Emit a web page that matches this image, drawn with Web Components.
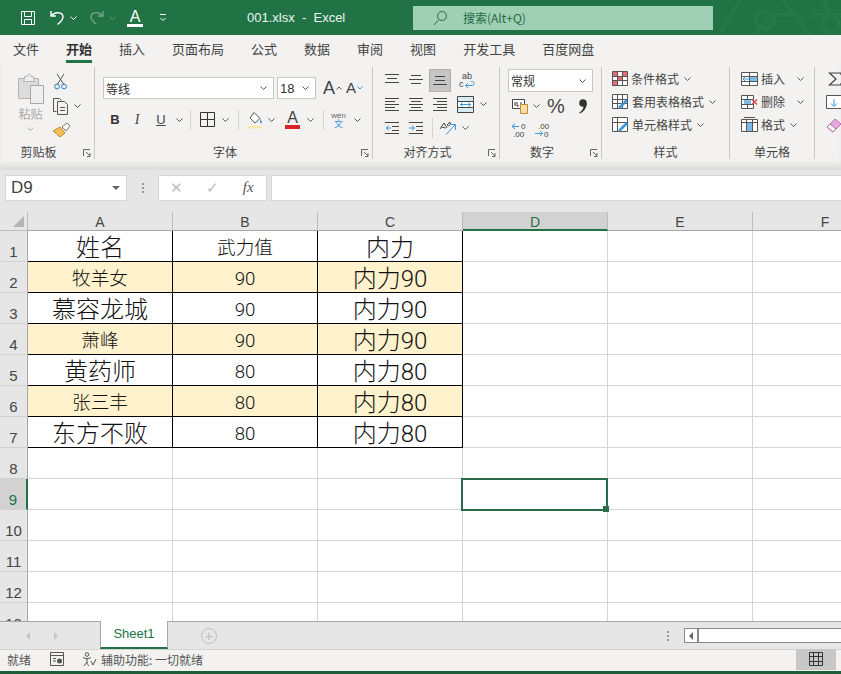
<!doctype html>
<html lang="zh">
<head>
<meta charset="utf-8">
<title>001.xlsx - Excel</title>
<style>
  html, body { margin: 0; height: 100%; overflow: hidden; }
  body {
    font-family: "Noto Sans CJK SC", "Liberation Sans", sans-serif;
    background: #f3f2f1;
  }
  .app { display: flex; flex-direction: column; width: 841px; height: 674px; overflow: hidden; }
</style>
</head>
<body>
<div class="app">
  <xl-titlebar></xl-titlebar>
  <xl-tabs></xl-tabs>
  <xl-ribbon></xl-ribbon>
  <xl-formula-bar></xl-formula-bar>
  <xl-sheet></xl-sheet>
  <xl-sheet-tabs></xl-sheet-tabs>
  <xl-status></xl-status>
</div>
<script>
const BLUE = '#3a96dd'
const DARK = '#444'

const lines = (rows, color = DARK) =>
  `<path stroke="${color}" d="${rows.map(([a, b, y]) => `M${a} ${y + 0.5}H${b}`).join('')}"/>`

// every icon is [width, height, svg body]
const ICONS = {
  save: [16, 16, `<path stroke="#fff" d="M1.5 1.500h13v13h-13zM4.500 1.500v5h7v-5M4.500 14.500v-5h7v5"/>`],
  undo: [16, 17, `<path stroke="#fff" stroke-width="1.400" d="M2 2v5h5M2.500 7C5 2.500 14 2.500 14 8c0 3-2.500 5-5.500 7.500"/>`],
  redo: [16, 17, `<path stroke="#6fa587" stroke-width="1.400" d="M14 2v5H9M13.500 7C11 2.500 2 2.500 2 8c0 3 2.500 5 5.500 7.500"/>`],
  customize: [8, 9, `<path stroke="#fff" d="M1 1.500h6M1.500 5l2.500 2.500L6.500 5"/>`],
  search: [16, 16, `<circle cx="10" cy="6" r="4.500" stroke="#2a6b47"/><path stroke="#2a6b47" d="M7 9.500L2 15"/>`],
  paste: [28, 31, `<path fill="#dcdcdc" stroke="#b4b4b4" d="M1.500 5.500h20v20h-20z"/><path fill="#eee" stroke="#b4b4b4" d="M7.500 5.500v-2h2.500c0-3 4-3 4 0h2.500v2l1 3h-11z"/><path fill="#efefef" stroke="#a8a8a8" d="M13.500 12.500h13v18h-13z"/>`],
  cut: [13, 17, `<path stroke="#555" d="M3 1l6.500 10M10 1L3.500 11"/><circle cx="3" cy="13.500" r="2.400" stroke="#1f7bc0"/><circle cx="10" cy="13.500" r="2.400" stroke="#1f7bc0"/>`],
  copy: [17, 18, `<path stroke="#555" d="M4.500 14.500h-3v-13h6l2 2"/><path stroke="#555" fill="#f3f2f1" d="M5.500 4.500h7l3 3v10h-10z"/><path stroke="#555" d="M8 10.500h5M8 13.500h5"/>`],
  painter: [19, 16, `<path fill="#f2c057" stroke="#c8862c" d="M1 9l7-4 5 6-5 4c-2-2-5-4-7-6z"/><path fill="#fff" stroke="#777" d="M10 5l5-4 3 3-4 5z"/>`],
  borders: [15, 15, `<path stroke="#333" d="M.5.500h14v14H.500zM7.500.500v14M.500 7.500h14"/>`],
  fill: [16, 18, `<path stroke="#555" fill="#fff" d="M6 1.500l6 6-5 4.500-5-5z"/><path fill="#3a96dd" d="M12 8c1 1.500 2 2.500 2 3.500s-2 1-2 0z"/><rect y="15" width="14" height="2.500" fill="#f7e9a8"/>`],
  up: [6, 4, `<path stroke="#555" d="M.5 3.500L3 1l2.500 2.500"/>`],
  down2: [6, 4, `<path stroke="#3a96dd" d="M.5.500L3 3l2.500-2.500"/>`],
  wrap: [16, 19, `<text x="3" y="8" font-size="9" fill="#444" font-family="Liberation Sans">ab</text><text x="0" y="16" font-size="9" fill="#444" font-family="Liberation Sans">c</text><path stroke="${BLUE}" d="M7 14.500h6.500c2 0 2-4 0-4H12M9 12l-2.500 2.500L9 17"/>`],
  merge: [17, 17, `<path fill="#d7ecf8" stroke="#444" d="M.5.500h16v16H.500z"/><path fill="#fff" stroke="#444" d="M.5 5.500h16v6H.500z"/><path stroke="${BLUE}" d="M3 8.500h11M5.500 6.500l-2 2 2 2M11.500 6.500l2 2-2 2"/>`],
  orient: [18, 16, `<path stroke="#444" d="M1 9l4-6 3 5M2.500 7l4 1M8 5l3-3M8 5c2 2 4 0 3-3"/><path stroke="${BLUE}" d="M7 14.500L16 5M11 4.500h5.500V10"/>`],
  indentL: [14, 12, lines([[0, 14, 0], [7, 14, 4], [7, 14, 8], [0, 14, 11]]) + `<path stroke="${BLUE}" d="M1 6h5M3.500 3.500L1 6l2.500 2.500"/>`],
  indentR: [14, 12, lines([[0, 14, 0], [7, 14, 4], [7, 14, 8], [0, 14, 11]]) + `<path stroke="${BLUE}" d="M0 6h5M3 3.500L5.500 6 3 8.500"/>`],
  alignTop: [14, 12, lines([[0, 14, 0], [2, 12, 4], [0, 14, 8]])],
  alignMid: [14, 12, lines([[2, 12, 1], [0, 14, 5], [2, 12, 9]])],
  alignBot: [14, 12, lines([[2, 12, 2], [2, 12, 6], [0, 14, 10]])],
  alignL: [14, 13, lines([[0, 14, 0], [0, 10, 3], [0, 14, 6], [0, 10, 9], [0, 14, 12]])],
  alignC: [14, 13, lines([[0, 14, 0], [2, 12, 3], [0, 14, 6], [2, 12, 9], [0, 14, 12]])],
  alignR: [14, 13, lines([[0, 14, 0], [4, 14, 3], [0, 14, 6], [4, 14, 9], [0, 14, 12]])],
  currency: [16, 16, `<path stroke="#444" fill="#fff" d="M.5 1.500h12v9H.500z"/><path stroke="#333" d="M3 4v4M5 4v4h2M9 4v3"/><path fill="#f7dfae" stroke="#c98a2b" d="M8.500 6.500h7v9h-7z"/>`],
  comma: [9, 15, `<circle cx="5" cy="4" r="3.800" fill="#333"/><path fill="#333" d="M8.800 4c0 5-3 9-7 10.500l-.5-1C4 12 5.500 10 5.500 7z"/>`],
  decInc: [17, 16, `<path stroke="${BLUE}" d="M1 4.500h7M4 2L1 4.500 4 7"/><text x="10" y="7" font-size="8" fill="#444" font-family="Liberation Sans">0</text><text x="2" y="15" font-size="8" fill="#444" font-family="Liberation Sans">.00</text>`],
  decDec: [16, 16, `<text x="3" y="7" font-size="8" fill="#444" font-family="Liberation Sans">.00</text><path stroke="${BLUE}" d="M0 11.500h7M5 9l2.500 2.500L5 14"/><text x="9" y="15" font-size="8" fill="#444" font-family="Liberation Sans">0</text>`],
  condFormat: [16, 15, `<path stroke="#555" fill="#fff" d="M.5.500h15v14H.500z"/><path fill="#e26b74" d="M1 1h5v4H1zM10 1h5v4h-5zM1 10h5v4H1zM6 5h4v5H6z"/><path stroke="#555" d="M5.500 1v13M10.500 1v13M1 5.500h14M1 9.500h14"/>`],
  tableFormat: [17, 16, `<path stroke="#555" fill="#fff" d="M.5.500h15v14H.500z"/><path stroke="#555" d="M5.500 1v13M10.500 1v13M1 5.500h14M1 9.500h14"/><path stroke="${BLUE}" stroke-width="2.500" d="M7 14l8-8"/>`],
  cellStyle: [17, 16, `<path stroke="#555" fill="#fff" d="M.5.500h15v14H.500zM5.500 1v13M1 5.500h14"/><path stroke="${BLUE}" stroke-width="2.500" d="M7 14l8-8"/>`],
  insert: [17, 14, `<path stroke="#555" fill="#fff" d="M.5.500h16v13H.500zM8.500 1v12M1 4.500h15M1 9.500h15"/><path fill="#7cbde8" d="M9 5h7v4H9z"/><path stroke="${BLUE}" d="M2 7h6M4.500 4.500L2 7l2.500 2.500"/>`],
  remove: [17, 14, `<path stroke="#555" fill="#fff" d="M.5.500h12v13H.500zM1 4.500h11M1 9.500h11M6.500 1v12"/><path fill="#7cbde8" d="M3 5h7v4H3z"/><path stroke="#d9434e" stroke-width="1.300" d="M11 4.500l5 5M16 4.500l-5 5"/>`],
  format: [17, 16, `<path stroke="#555" fill="#fff" d="M.5 2.500h16v12H.500zM1 5.500h15M5.500 3v11M11.500 3v11"/><path fill="#7cbde8" d="M6 6h5v8H6z"/><path stroke="#555" d="M3 .500h11"/>`],
  sigma: [14, 14, `<path stroke="#444" stroke-width="1.200" d="M13 3V1H1.500L8 7l-6.500 6H13v-2"/>`],
  down: [16, 14, `<path stroke="#555" fill="#fff" d="M.5.500h15v13H.500z"/><path stroke="${BLUE}" d="M8 4v7M5 8.500L8 11.500l3-3"/>`],
  eraser: [16, 15, `<path fill="#e8a8e0" stroke="#b56bb0" d="M1 9l8-8 6 5-8 8z"/><path fill="#fff" stroke="#b56bb0" d="M1 9l3-3 6 5-3 3z"/>`],
  launcher: [8, 8, `<path stroke="#666" d="M.5 7V.500H7M3 3l4 4M7 4v3.500H4"/>`],
  caret: [7, 4, `<path stroke="#555" d="M.5.500L3.500 3.500 6.500.500"/>`],
  caretPale: [7, 4, `<path stroke="#aaa" d="M.5.500L3.500 3.500 6.500.500"/>`],
  caretGreen: [7, 4, `<path stroke="#fff" d="M.5.500L3.500 3.500 6.500.500"/>`],
  caretDim: [7, 4, `<path stroke="#5f9b7a" d="M.5.500L3.500 3.500 6.500.500"/>`],
  macro: [14, 14, `<path stroke="#555" fill="none" d="M.5.500h13v13H.500zM.5 3.500h13M3 6.500h3M3 9h3"/><circle cx="9.500" cy="9" r="2.500" fill="#555"/>`],
  access: [15, 15, `<circle cx="5" cy="2.500" r="1.800" stroke="#555"/><path stroke="#555" d="M1 5.500c3 1.500 5 1.500 8 0M5 7v3c0 2 1 3 2 4M5 10c-1 1-2 3-3 4M9 9l2 4 3-6"/>`],
  cellView: [14, 14, `<path stroke="#333" d="M.5.500h13v13H.500zM4.500.500v13M9.500.500v13M.500 4.500h13M.500 9.500h13"/>`],
}

customElements.define(
  'xl-icon',
  class XlIcon extends HTMLElement {
    constructor() {
      super()
      this.attachShadow({ mode: 'open' })
    }

    connectedCallback() {
      const [w, h, body] = ICONS[this.getAttribute('name')]
      this.shadowRoot.innerHTML = `
        <style>
          :host { display: inline-flex; flex: none; }
          svg { display: block; fill: none; }
        </style>
        <svg width="${w}" height="${h}" viewBox="0 0 ${w} ${h}">${body}</svg>
      `
    }
  }
)

customElements.define(
  'xl-titlebar',
  class XlTitlebar extends HTMLElement {
    constructor() {
      super()
      this.attachShadow({ mode: 'open' })
      this.shadowRoot.innerHTML = `
        <style>
          :host {
            display: flex;
            flex: none;
            align-items: center;
            height: 35px;
            background: #217346;
            color: #fff;
            position: relative;
            overflow: hidden;
          }
          .qat { display: flex; align-items: center; padding-left: 20px; width: 247px; box-sizing: border-box; }
          .a {
            width: 16px; margin: 0 0 0 11px; text-align: center;
            font: 16px/15px "Liberation Sans", sans-serif;
            border-bottom: 3px solid #fff;
          }
          .title { width: 166px; font: 13px "Liberation Sans", sans-serif; white-space: pre; color: #eef6f1; }
          .search {
            display: flex; align-items: center;
            width: 300px; height: 24px; box-sizing: border-box;
            padding-left: 19px;
            background: #9fcfb4;
            color: #1f6a41;
            font-size: 12px;
            position: relative;
            z-index: 1;
          }
          .search span { margin-left: 15px; }
          .pattern { position: absolute; right: 0; top: 0; }
        </style>
        <div class="qat">
          <xl-icon name="save"></xl-icon>
          <xl-icon name="undo" style="margin-left:13px"></xl-icon>
          <xl-icon name="caretGreen" style="margin-left:5px"></xl-icon>
          <xl-icon name="redo" style="margin-left:12px"></xl-icon>
          <xl-icon name="caretDim" style="margin-left:4px"></xl-icon>
          <div class="a">A</div>
          <xl-icon name="customize" style="margin-left:16px"></xl-icon>
        </div>
        <div class="title">001.xlsx  -  Excel</div>
        <div class="search"><xl-icon name="search"></xl-icon><span>搜索(Alt+Q)</span></div>
        <svg class="pattern" width="128" height="35" fill="none" stroke="#267749" stroke-width="4">
          <path d="M8 30L28 0M40 35l18-20h24l14 20M70 0l12 15M100 15h28M110 0l8 15"/>
          <circle cx="52" cy="20" r="9"/>
          <circle cx="118" cy="24" r="8"/>
        </svg>
      `
    }
  }
)

customElements.define(
  'xl-tabs',
  class XlTabs extends HTMLElement {
    constructor() {
      super()
      this.attachShadow({ mode: 'open' })
      const names = ['文件', '开始', '插入', '页面布局', '公式', '数据', '审阅', '视图', '开发工具', '百度网盘']
      this.shadowRoot.innerHTML = `
        <style>
          :host {
            display: flex;
            flex: none;
            gap: 27px;
            height: 28px;
            padding-left: 13px;
            background: #f3f2f1;
            color: #444;
            font-size: 13px;
          }
          .tab { line-height: 28px; white-space: nowrap; box-sizing: border-box; height: 28px; }
          .on { font-weight: 700; color: #333; border-bottom: 3px solid #217346; }
        </style>
        ${names.map((n, i) => `<div class="tab ${i === 1 ? 'on' : ''}">${n}</div>`).join('')}
      `
    }
  }
)

customElements.define(
  'xl-ribbon-group',
  class XlRibbonGroup extends HTMLElement {
    constructor() {
      super()
      this.attachShadow({ mode: 'open' })
      const launcher = this.hasAttribute('launcher')
      this.shadowRoot.innerHTML = `
        <style>
          :host {
            display: flex;
            flex: none;
            flex-direction: column;
            box-sizing: border-box;
            height: 92px;
            margin-top: 4px;
            border-right: 1px solid #c8c8c8;
            position: relative;
          }
          .body { flex: 1; min-height: 0; }
          .label {
            flex: none;
            height: 18px;
            line-height: 18px;
            margin-bottom: -2px;
            font-size: 12px;
            color: #444;
            text-align: center;
            white-space: nowrap;
            padding-right: ${launcher ? 17 : 0}px;
          }
          xl-icon { position: absolute; right: 3px; bottom: 2px; }
        </style>
        <div class="body"><slot></slot></div>
        <div class="label">${this.getAttribute('label')}</div>
        ${launcher ? '<xl-icon name="launcher"></xl-icon>' : ''}
      `
    }
  }
)

const tool = (name, ml = 0) => `<xl-icon name="${name}" style="margin-left:${ml}px"></xl-icon>`
const styleRow = (icon, text, caretGap = 5) =>
  `<div class="row text">${tool(icon)}<span>${text}</span>${tool('caret', caretGap)}</div>`

customElements.define(
  'xl-ribbon',
  class XlRibbon extends HTMLElement {
    constructor() {
      super()
      this.attachShadow({ mode: 'open' })
      this.shadowRoot.innerHTML = `
        <style>
          :host {
            display: flex;
            flex: none;
            height: 107px;
            box-sizing: border-box;
            padding-bottom: 9px;
            background: #f3f2f1;
            box-shadow: inset 0 -8px 6px -3px #dcdcdc;
            color: #444;
            font-size: 12px;
            overflow: hidden;
          }
          .row { display: flex; align-items: center; }
          .sep { width: 1px; height: 20px; background: #d2d2d2; flex: none; }
          .box {
            display: flex; align-items: center; box-sizing: border-box;
            background: #fff; border: 1px solid #c6c6c6;
            height: 22px; padding: 0 6px 0 2px; justify-content: space-between; color: #333;
          }
          /* clipboard */
          .clip { display: flex; padding: 6px 0 0 17px; }
          .paste { display: flex; flex-direction: column; align-items: center; width: 27px; color: #a8a8a8; }
          .paste span { margin-top: 1px; line-height: 17px; }
          .paste xl-icon:last-child { margin-top: 5px; }
          .clip-tools { display: flex; flex-direction: column; margin-left: 8px; gap: 7px; }
          /* font */
          .font { padding: 10px 0 0 8px; }
          .font .row + .row { margin-top: 11px; height: 19px; }
          .bold { font: 700 13px "Liberation Sans", sans-serif; width: 10px; text-align: center; color: #333; }
          .ital { font: italic 14px "Liberation Serif", serif; width: 10px; text-align: center; }
          .und { font: 13px "Liberation Sans", sans-serif; width: 10px; text-align: center; text-decoration: underline; }
          .grow { font: 18px/18px "Liberation Sans", sans-serif; color: #444; }
          .color { width: 15px; text-align: center; font: 16px/14px "Liberation Sans", sans-serif; border-bottom: 4px solid #d8232a; }
          .wen { width: 15px; text-align: center; font: 8px/9px "Liberation Sans", "Noto Sans CJK SC", sans-serif; color: #666; }
          .wen b { display: block; font-weight: 400; color: #3a96dd; font-size: 9px; }
          /* alignment */
          .align { padding: 1px 0 0 12px; }
          .align .row { height: 24px; }
          .sel { display: flex; align-items: center; justify-content: center; width: 22px; height: 23px; background: #c6c6c6; border: 1px solid #b0b0b0; box-sizing: border-box; flex: none; }
          /* number */
          .num { padding: 2px 0 0 8px; }
          .num .row { height: 24px; }
          .pct { font: 20px "Liberation Sans", sans-serif; color: #444; }
          /* styles and cells */
          .stacked { display: flex; flex-direction: column; gap: 8px; padding: 4px 0 0 10px; }
          .text { height: 15px; line-height: 15px; white-space: nowrap; }
          .text span { margin-left: 3px; }
          .edit { display: flex; flex-direction: column; gap: 9px; padding: 9px 0 0 11px; }
        </style>

        <xl-ribbon-group label="剪贴板" launcher style="width:95px">
          <div class="clip">
            <div class="paste">
              ${tool('paste')}
              <span>粘贴</span>
              ${tool('caretPale')}
            </div>
            <div class="clip-tools">
              ${tool('cut', 2)}
              <div class="row">${tool('copy')}${tool('caret', 5)}</div>
              ${tool('painter')}
            </div>
          </div>
        </xl-ribbon-group>

        <xl-ribbon-group label="字体" launcher style="width:278px">
          <div class="font">
            <div class="row">
              <div class="box" style="width:171px">等线${tool('caret')}</div>
              <div class="box" style="width:39px;margin-left:3px;font:13px 'Liberation Sans',sans-serif">18${tool('caret')}</div>
              <div class="grow" style="margin-left:7px">A</div>
              ${tool('up', 1)}
              <div class="grow" style="margin-left:4px;font-size:15px">A</div>
              ${tool('down2', 1)}
            </div>
            <div class="row">
              <div class="bold" style="margin-left:7px">B</div>
              <div class="ital" style="margin-left:12px">I</div>
              <div class="und" style="margin-left:14px">U</div>
              ${tool('caret', 10)}
              <div class="sep" style="margin-left:7px"></div>
              ${tool('borders', 9)}
              ${tool('caret', 7)}
              <div class="sep" style="margin-left:9px"></div>
              ${tool('fill', 9)}
              ${tool('caret', 4)}
              <div class="color" style="margin-left:10px">A</div>
              ${tool('caret', 7)}
              <div class="sep" style="margin-left:9px"></div>
              <div class="wen" style="margin-left:7px">wén<b>文</b></div>
              ${tool('caret', 8)}
            </div>
          </div>
        </xl-ribbon-group>

        <xl-ribbon-group label="对齐方式" launcher style="width:127px">
          <div class="align">
            <div class="row">
              ${tool('alignTop')}${tool('alignMid', 10)}
              <div class="sel" style="margin-left:6px">${tool('alignBot')}</div>
              ${tool('wrap', 8)}
            </div>
            <div class="row">
              ${tool('alignL')}${tool('alignC', 10)}${tool('alignR', 10)}
              ${tool('merge', 10)}${tool('caret', 6)}
            </div>
            <div class="row">
              ${tool('indentL')}${tool('indentR', 10)}
              <div class="sep" style="margin-left:9px"></div>
              ${tool('orient', 6)}${tool('caret', 5)}
            </div>
          </div>
        </xl-ribbon-group>

        <xl-ribbon-group label="数字" launcher style="width:102px">
          <div class="num">
            <div class="box" style="width:85px;height:23px;margin-bottom:2px">常规${tool('caret')}</div>
            <div class="row">
              ${tool('currency', 4)}${tool('caret', 5)}
              <div class="pct" style="margin-left:7px">%</div>
              ${tool('comma', 13)}
            </div>
            <div class="row">
              ${tool('decInc', 3)}${tool('decDec', 7)}
            </div>
          </div>
        </xl-ribbon-group>

        <xl-ribbon-group label="样式" style="width:128px">
          <div class="stacked">
            ${styleRow('condFormat', '条件格式')}
            ${styleRow('tableFormat', '套用表格格式')}
            ${styleRow('cellStyle', '单元格样式')}
          </div>
        </xl-ribbon-group>

        <xl-ribbon-group label="单元格" style="width:85px">
          <div class="stacked" style="padding-left:11px">
            ${styleRow('insert', '插入', 12)}
            ${styleRow('remove', '删除', 12)}
            ${styleRow('format', '格式')}
          </div>
        </xl-ribbon-group>

        <div class="edit">
          ${tool('sigma', 2)}
          ${tool('down')}
          ${tool('eraser')}
        </div>
      `
    }
  }
)

customElements.define(
  'xl-formula-bar',
  class XlFormulaBar extends HTMLElement {
    constructor() {
      super()
      this.attachShadow({ mode: 'open' })
      this.shadowRoot.innerHTML = `
        <style>
          :host {
            display: flex;
            flex: none;
            align-items: center;
            height: 42px;
            box-sizing: border-box;
            padding: 0 0 7px 5px;
            background: #e6e6e6;
            font-family: "Liberation Sans", sans-serif;
          }
          .field { height: 26px; box-sizing: border-box; background: #fff; border: 1px solid #d6d6d6; display: flex; align-items: center; }
          .name { width: 122px; padding: 0 6px 0 5px; font-size: 17px; color: #444; justify-content: space-between; }
          .tri { width: 0; height: 0; border: 4px solid transparent; border-top: 4px solid #666; border-bottom: 0; }
          .dots { width: 2px; height: 2px; background: #999; box-shadow: 0 -4px #999, 0 4px #999; margin: 0 14px 0 15px; }
          .btns { width: 109px; gap: 0; color: #bbb; }
          .btns span { flex: 1; text-align: center; font-size: 15px; }
          .fx { font: italic 13px "Liberation Serif", serif; color: #555 !important; }
          .input { flex: 1; margin-left: 4px; border-right: 0; }
        </style>
        <div class="field name">D9<span class="tri"></span></div>
        <span class="dots"></span>
        <div class="field btns"><span>✕</span><span>✓</span><span class="fx">fx</span></div>
        <div class="field input"></div>
      `
    }
  }
)

const TABLE = [
  [['姓名', 24], ['武力值', 18.67], ['内力', 24]],
  [['牧羊女', 18.67], ['90', 18.67], ['内力90', 24]],
  [['慕容龙城', 24], ['90', 18.67], ['内力90', 24]],
  [['萧峰', 18.67], ['90', 18.67], ['内力90', 24]],
  [['黄药师', 24], ['80', 18.67], ['内力80', 24]],
  [['张三丰', 18.67], ['80', 18.67], ['内力80', 24]],
  [['东方不败', 24], ['80', 18.67], ['内力80', 24]],
]

customElements.define(
  'xl-sheet',
  class XlSheet extends HTMLElement {
    constructor() {
      super()
      this.attachShadow({ mode: 'open' })
      const cols = ['A', 'B', 'C', 'D', 'E', 'F']
      let html = '<div class="hd corner"><i></i></div>'
      cols.forEach(c => {
        html += `<div class="hd col ${c === 'D' ? 'active' : ''}">${c}</div>`
      })
      for (let r = 1; r <= 13; r++) {
        html += `<div class="hd rownum ${r === 9 ? 'active' : ''}">${r}</div>`
        cols.forEach((c, i) => {
          const data = TABLE[r - 1] && TABLE[r - 1][i]
          const classes = ['cell']
          if (data) classes.push('data')
          if (data && r % 2 === 0) classes.push('band')
          if (c === 'D' && r === 9) classes.push('current')
          const text = data ? `<span style="font-size:${data[1]}px">${data[0]}</span>` : ''
          html += `<div class="${classes.join(' ')}">${text}</div>`
        })
      }
      this.shadowRoot.innerHTML = `
        <style>
          :host {
            display: block;
            flex: 1;
            min-height: 0;
            overflow: hidden;
            background: #fff;
          }
          .grid {
            display: grid;
            grid-template-columns: 28px repeat(5, 145px) 145px;
            grid-template-rows: 19px repeat(13, 31px);
            font-family: "Liberation Sans", "Noto Sans CJK SC", sans-serif;
          }
          .hd {
            background: #e6e6e6;
            color: #444;
            box-sizing: border-box;
            border-right: 1px solid #bdbdbd;
            border-bottom: 1px solid #bdbdbd;
            display: flex;
            justify-content: center;
          }
          .corner { position: relative; }
          .corner i {
            position: absolute; right: 3px; bottom: 3px; width: 0; height: 0;
            border-left: 11px solid transparent; border-bottom: 11px solid #b4b4b4;
          }
          .col { font-size: 14px; line-height: 21px; border-bottom-color: #a8a8a8; }
          .rownum { font-size: 15px; align-items: flex-end; padding-bottom: 1px; border-bottom-color: #d0d0d0; border-right-color: #a8a8a8; }
          .hd.active { background: #d2d2d2; color: #217346; }
          .col.active { border-bottom: 2px solid #217346; }
          .rownum.active { border-right: 2px solid #217346; }
          .cell {
            box-sizing: border-box;
            border-right: 1px solid #d4d4d4;
            border-bottom: 1px solid #d4d4d4;
            display: flex;
            align-items: center;
            justify-content: center;
            color: #111;
            line-height: 1;
            white-space: nowrap;
          }
          .data {
            border-color: #000;
            padding-top: 4px;
            font-family: Roboto, "Noto Sans CJK SC", sans-serif;
            font-weight: 300;
          }
          .band { background: #fff2cc; }
          .current {
            position: relative;
            margin: 0 1px 0 -1px;
            outline: 2px solid #2a6b4a;
            outline-offset: -1px;
            z-index: 1;
          }
          .current::after {
            content: ''; position: absolute; right: -3px; bottom: -3px;
            width: 6px; height: 6px; background: #2a6b4a;
          }
        </style>
        <div class="grid">${html}</div>
      `
    }
  }
)

customElements.define(
  'xl-sheet-tabs',
  class XlSheetTabs extends HTMLElement {
    constructor() {
      super()
      this.attachShadow({ mode: 'open' })
      this.shadowRoot.innerHTML = `
        <style>
          :host {
            display: flex;
            flex: none;
            align-items: stretch;
            height: 29px;
            box-sizing: border-box;
            background: #e6e6e6;
            border-top: 1px solid #a6a6a6;
            border-bottom: 1px solid #d2d2d2;
            font-family: "Liberation Sans", sans-serif;
          }
          .nav { display: flex; align-items: center; width: 100px; padding-left: 26px; gap: 24px; box-sizing: border-box; }
          .nav i { width: 0; height: 0; border: 4px solid transparent; }
          .prev { border-left: 0 !important; border-right: 4px solid #c4c4c4 !important; }
          .next { border-right: 0 !important; border-left: 4px solid #c4c4c4 !important; }
          .tab {
            width: 68px; margin-top: -1px; box-sizing: border-box;
            background: #fff; color: #217346; font-size: 13px;
            text-align: center; line-height: 25px;
            border-bottom: 2px solid #217346;
            border-left: 1px solid #a6a6a6; border-right: 1px solid #a6a6a6;
            height: 28px;
          }
          .plus {
            width: 14px; height: 14px; border: 1px solid #c0c0c0; border-radius: 50%;
            margin: 6px 0 0 33px; position: relative; flex: none; color: #c0c0c0;
            text-align: center; line-height: 13px; font-size: 15px;
          }
          .dots { width: 2px; height: 2px; background: #999; box-shadow: 0 -4px #999, 0 4px #999; margin: 13px 0 0 450px; flex: none; }
          .scroll { display: flex; margin: 6px 0 0 15px; height: 15px; flex: 1; box-sizing: border-box; background: #fff; border: 1px solid #8a8a8a; border-right: 0; }
          .left { width: 14px; box-sizing: border-box; border-right: 2px solid #8a8a8a; display: flex; align-items: center; justify-content: center; }
          .left i { width: 0; height: 0; border: 4px solid transparent; border-left: 0; border-right: 4px solid #666; }
        </style>
        <div class="nav"><i class="prev"></i><i class="next"></i></div>
        <div class="tab">Sheet1</div>
        <div class="plus">+</div>
        <div class="dots"></div>
        <div class="scroll"><div class="left"><i></i></div></div>
      `
    }
  }
)

customElements.define(
  'xl-status',
  class XlStatus extends HTMLElement {
    constructor() {
      super()
      this.attachShadow({ mode: 'open' })
      this.shadowRoot.innerHTML = `
        <style>
          :host {
            display: flex;
            flex: none;
            align-items: center;
            height: 24px;
            box-sizing: border-box;
            padding: 0 5px 3px 7px;
            background: #f3f2f1;
            border-bottom: 3px solid #1f5c3a;
            color: #555;
            font-size: 12px;
          }
          .msg { margin-left: 4px; }
          .view {
            display: flex; align-items: center; justify-content: center;
            width: 40px; height: 21px; margin-left: auto; background: #c8c8c8;
          }
        </style>
        <span>就绪</span>
        <xl-icon name="macro" style="margin-left:19px"></xl-icon>
        <xl-icon name="access" style="margin-left:18px"></xl-icon>
        <span class="msg">辅助功能: 一切就绪</span>
        <div class="view"><xl-icon name="cellView"></xl-icon></div>
      `
    }
  }
)
</script>
</body>
</html>
